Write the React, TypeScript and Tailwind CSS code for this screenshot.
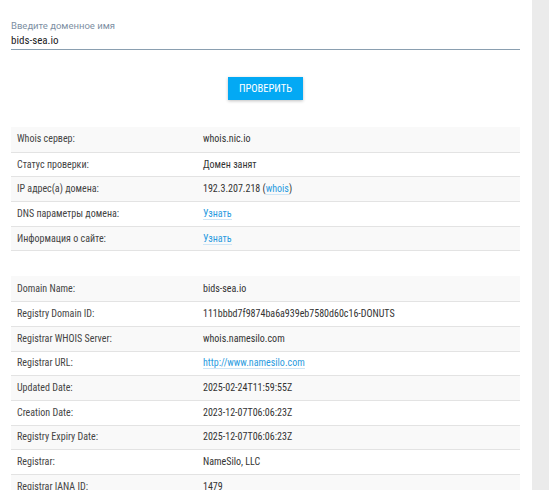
import React from 'react';

type Row = { label: string; value: React.ReactNode };

const Link: React.FC<{ children: React.ReactNode }> = ({ children }) => (
  <a href="#" className="text-[#2a9be0] border-b border-[#cfe6f6]">
    {children}
  </a>
);

const checkRows: Row[] = [
  { label: 'Whois сервер:', value: 'whois.nic.io' },
  { label: 'Статус проверки:', value: 'Домен занят' },
  {
    label: 'IP адрес(а) домена:',
    value: (
      <>
        192.3.207.218 (<Link>whois</Link>)
      </>
    ),
  },
  { label: 'DNS параметры домена:', value: <Link>Узнать</Link> },
  { label: 'Информация о сайте:', value: <Link>Узнать</Link> },
];

const whoisRows: Row[] = [
  { label: 'Domain Name:', value: 'bids-sea.io' },
  { label: 'Registry Domain ID:', value: '111bbbd7f9874ba6a939eb7580d60c16-DONUTS' },
  { label: 'Registrar WHOIS Server:', value: 'whois.namesilo.com' },
  { label: 'Registrar URL:', value: <Link>http://www.namesilo.com</Link> },
  { label: 'Updated Date:', value: '2025-02-24T11:59:55Z' },
  { label: 'Creation Date:', value: '2023-12-07T06:06:23Z' },
  { label: 'Registry Expiry Date:', value: '2025-12-07T06:06:23Z' },
  { label: 'Registrar:', value: 'NameSilo, LLC' },
  { label: 'Registrar IANA ID:', value: '1479' },
];

const InfoTable: React.FC<{ rows: Row[] }> = ({ rows }) => (
  <div className="border-b border-[#e3e3e3]">
    {rows.map((row, i) => (
      <div
        key={row.label}
        className={`flex h-[24.7px] items-center text-[10px] leading-none ${
          i % 2 === 0 ? 'bg-[#f9f9f9]' : 'bg-white'
        } ${i > 0 ? 'border-t border-[#e3e3e3]' : ''}`}
      >
        <div className="w-[186px] pl-[6px] text-[#444]">{row.label}</div>
        <div className="flex-1 pl-[6px] text-[#333]">{row.value}</div>
      </div>
    ))}
  </div>
);

const App: React.FC = () => {
  return (
    <div className="flex h-[490px] overflow-hidden font-['Roboto_Condensed',Roboto,sans-serif]">
      {/* основная колонка */}
      <div className="w-[532px] bg-white pl-[11px] pr-[12px]">
        {/* поле ввода */}
        <div className="pt-[19px]">
          <div className="h-[14px] text-[9.5px] leading-[14px] text-[#7d8fa3] font-['Roboto',sans-serif]">
            Введите доменное имя
          </div>
          <div className="h-[17px] border-b border-[#8a9fb0] text-[11px] leading-[16px] text-[#222]">
            bids-sea.io
          </div>
        </div>

        {/* кнопка */}
        <div className="mt-[27px] flex justify-center">
          <button className="h-[23px] w-[75px] bg-[#03a9f4] text-[10.5px] font-normal uppercase text-white shadow-[0_1px_3px_rgba(0,0,0,0.25)]">
            Проверить
          </button>
        </div>

        {/* результаты */}
        <div className="mt-[27px]">
          <InfoTable rows={checkRows} />
        </div>
        <div className="mt-[25px]">
          <InfoTable rows={whoisRows} />
        </div>
      </div>

      {/* боковая полоса */}
      <div className="flex-1 bg-[#ebebeb]" />
    </div>
  );
};

export default App;
